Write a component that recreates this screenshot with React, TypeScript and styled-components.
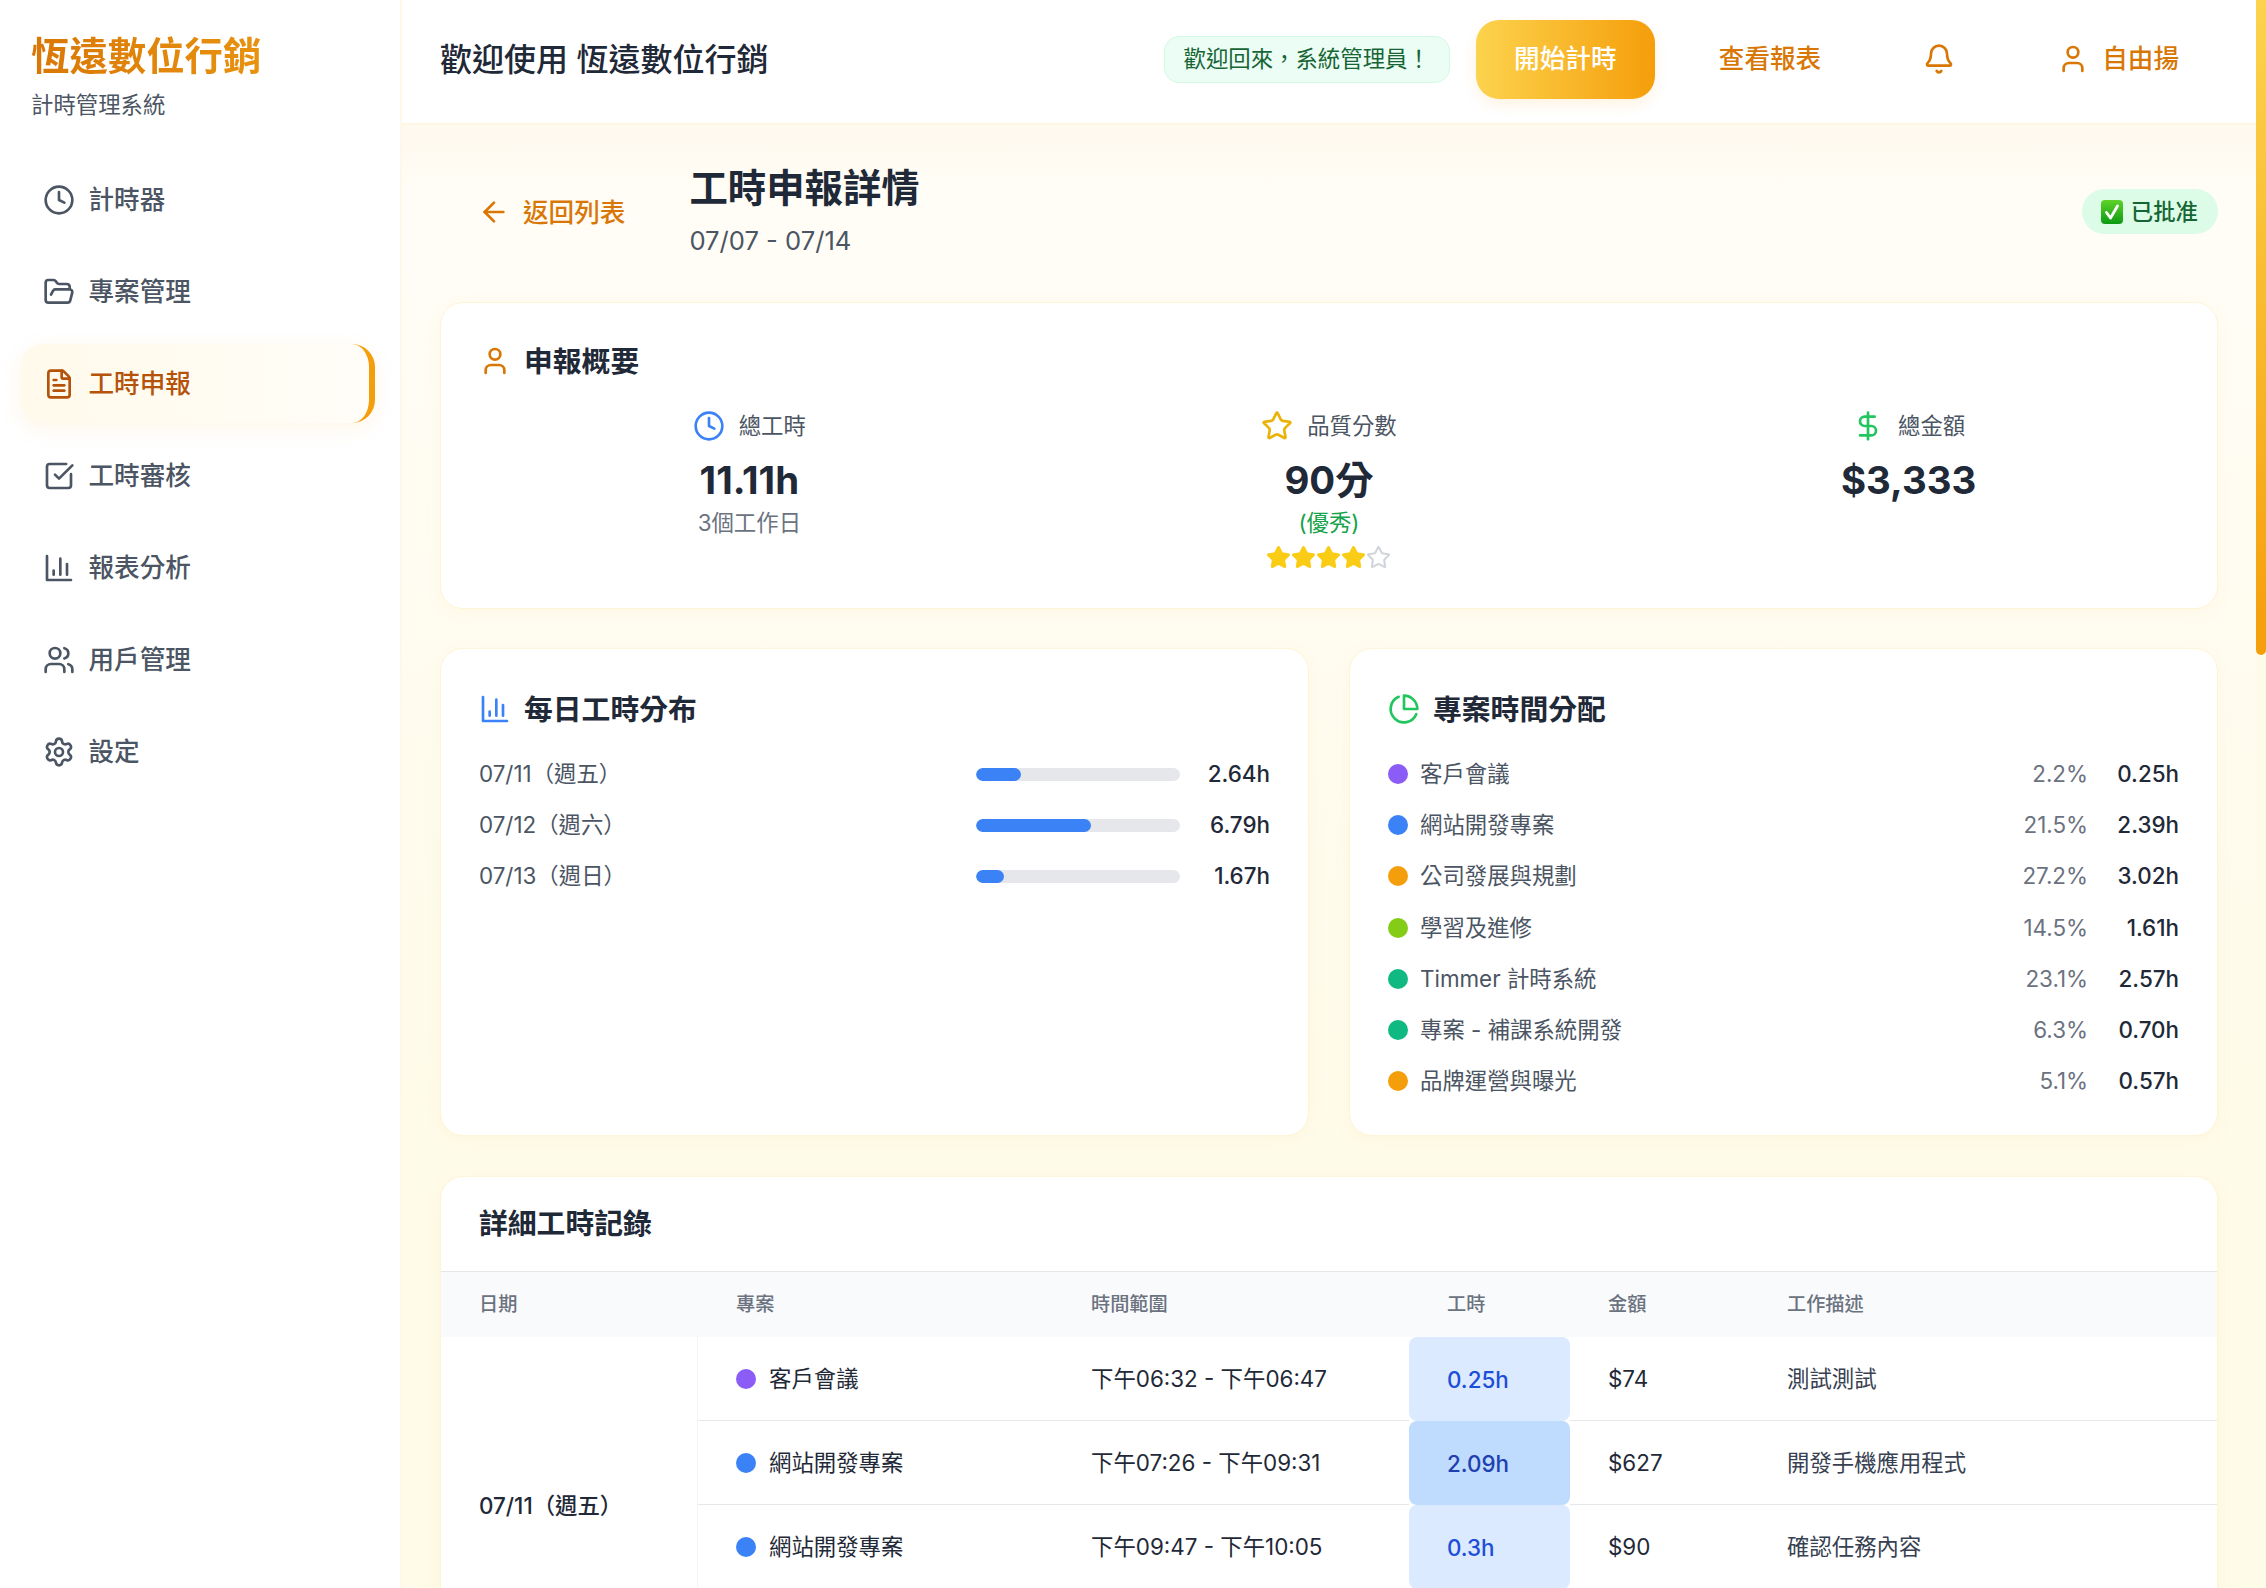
import React from "react";
import styled, { createGlobalStyle } from "styled-components";
import { ArrowLeft, Bell, Clock, DollarSign, FileText, FolderOpen, Settings, SquareCheckBig, Star, User, Users } from "lucide-react";

const FONT = `Inter, "Noto Sans CJK TC", "Noto Sans", sans-serif`;

const Global = createGlobalStyle`
  html, body { margin: 0; padding: 0; height: 100%; overflow: hidden; }
  body { font-family: ${FONT}; color: #1f2937; background: #fffdf4; }
  * { box-sizing: border-box; }
`;

const Shell = styled.div`
  display: flex;
  width: 2266px;
  height: 1588px;
  overflow: hidden;
  position: relative;
  background: #fefbe8;
`;

/* Noto CJK sits a little lower on the Inter baseline than the reference face does. */
const Lift = styled.span<{ $by: number }>`
  display: block;
  margin-bottom: ${(p) => p.$by * 2}px;
`;

const Sidebar = styled.aside`
  flex: 0 0 402px;
  background: #ffffff;
  border-right: 2px solid #fdf8ea;
  padding: 31px 25px 0 20px;
`;
const Logo = styled.div`
  margin-left: 11px;
  font-size: 38.4px;
  line-height: 50px;
  font-weight: 700;
  width: max-content;
  background: linear-gradient(90deg, #d97706, #e8920f);
  -webkit-background-clip: text;
  background-clip: text;
  color: transparent;
`;
const LogoSub = styled.div`
  margin: 9px 0 0 11px;
  font-size: 22.4px;
  line-height: 30px;
  color: #4b5563;
`;
const Nav = styled.nav`
  margin-top: 40px;
  display: flex;
  flex-direction: column;
  gap: 13px;
`;
const NavItem = styled.a<{ $active?: boolean }>`
  height: 79px;
  display: flex;
  align-items: center;
  gap: 13.5px;
  padding-left: 23px;
  border-radius: 23px;
  font-size: 25.6px;
  font-weight: 500;
  color: ${(p) => (p.$active ? "#b45309" : "#4b5563")};
  background: ${(p) => (p.$active ? "linear-gradient(90deg, #fffaeb, #fffdf7)" : "transparent")};
  border-right: ${(p) => (p.$active ? "6px solid #f59e0b" : "0")};
  box-shadow: ${(p) => (p.$active ? "0 6px 22px rgba(245, 158, 11, 0.09)" : "none")};
`;

const Main = styled.div`
  flex: 1;
  min-width: 0;
  margin-right: 10px;
  display: flex;
  flex-direction: column;
`;
const Header = styled.header`
  flex: 0 0 125px;
  display: flex;
  align-items: center;
  justify-content: space-between;
  padding: 0 39px 5px 38px;
  background: #ffffff;
  border-bottom: 2px solid #fdf6e3;
`;
const HeaderTitle = styled.h1`
  margin: 0;
  font-size: 32px;
  font-weight: 500;
  color: #1f2937;
`;
const HeaderActions = styled.div`
  display: flex;
  align-items: center;
  gap: 26px;
`;
const WelcomePill = styled.div`
  height: 47px;
  display: flex;
  align-items: center;
  padding: 0 19px;
  font-size: 22.4px;
  color: #166534;
  background: #ecfdf5;
  border: 1.5px solid #d1fae5;
  border-radius: 15px;
`;
const StartButton = styled.button`
  height: 79px;
  width: 179px;
  padding: 0;
  display: flex;
  align-items: center;
  justify-content: center;
  border: 0;
  border-radius: 23px;
  font: 500 25.6px ${FONT};
  color: #ffffff;
  background: linear-gradient(90deg, #fcd34d, #f59e0b);
  box-shadow: 0 6px 14px rgba(245, 158, 11, 0.12);
`;
const GhostButton = styled.button`
  height: 79px;
  padding: 0 38px;
  display: flex;
  align-items: center;
  gap: 13px;
  border: 0;
  background: transparent;
  font: 500 25.6px ${FONT};
  color: #d97706;
`;

const Page = styled.main`
  flex: 1;
  min-height: 0;
  overflow: hidden;
  padding: 38px 38px 0;
  background: linear-gradient(180deg, #fff9ee 0, #fffdf6 70px, #fffcf0 500px, #fefbe8 1100px);
`;
const PageHead = styled.div`
  display: flex;
  align-items: center;
  justify-content: space-between;
  margin-bottom: 42px;
`;
const PageHeadLeft = styled.div`
  display: flex;
  align-items: center;
  gap: 26px;
`;
const BackLink = styled.a`
  display: flex;
  align-items: center;
  gap: 13px;
  padding: 0 38px;
  font-size: 25.6px;
  font-weight: 500;
  color: #d97706;
`;
const PageTitle = styled.h2`
  margin: 0;
  font-size: 38.4px;
  line-height: 50px;
  font-weight: 700;
  color: #1f2937;
`;
const PageDate = styled.div`
  margin-top: 9px;
  font-size: 25.6px;
  line-height: 38px;
  color: #4b5563;
`;
const StatusBadge = styled.div`
  display: flex;
  align-items: center;
  gap: 8px;
  height: 45px;
  padding: 0 20px 0 19px;
  border-radius: 23px;
  background: #dcfce7;
  color: #166534;
  font-size: 22.4px;
  font-weight: 500;
`;

const Card = styled.section`
  background: #ffffff;
  border: 1.5px solid #fef5d6;
  border-radius: 23px;
  box-shadow: 0 4px 18px rgba(245, 158, 11, 0.05);
`;
const PadCard = styled(Card)`
  padding: 37px 38px 38px;
`;
const CardHeading = styled.h3<{ $offset?: number }>`
  margin: ${(p) => p.$offset ?? 0}px 0 0;
  display: flex;
  align-items: center;
  gap: 13px;
  height: 42px;
  font-size: 28.8px;
  font-weight: 600;
  color: #1f2937;
`;
const StatGrid = styled.div`
  margin-top: 29px;
  display: grid;
  grid-template-columns: repeat(3, 1fr);
  gap: 39px;
`;
const Stat = styled.div`
  display: flex;
  flex-direction: column;
  align-items: center;
`;
const StatLabel = styled.div`
  display: flex;
  align-items: center;
  gap: 14px;
  height: 32px;
  margin-top: -1px;
  margin-bottom: 1px;
  font-size: 22.4px;
  color: #4b5563;
`;
const StatValue = styled.div`
  margin-top: 14px;
  font-size: 38.4px;
  line-height: 46px;
  font-weight: 700;
  color: #1f2937;
`;
const StatSub = styled.div<{ $good?: boolean }>`
  margin-top: 5px;
  font-size: 22.4px;
  line-height: 30px;
  color: ${(p) => (p.$good ? "#16a34a" : "#6b7280")};
`;
const Rating = styled.div`
  margin-top: 6px;
  display: flex;
  height: 26px;
  align-items: center;
`;

const TwoCols = styled.div`
  margin-top: 39px;
  display: grid;
  grid-template-columns: 1fr 1fr;
  gap: 40px;
  height: 488px;
`;
const RowList = styled.div`
  margin-top: 28px;
  display: flex;
  flex-direction: column;
  gap: 19.2px;
`;
const DataRow = styled.div`
  display: flex;
  align-items: center;
  height: 32px;
  font-size: 22.4px;
`;
const DayLabel = styled.div`
  flex: 1;
  padding-bottom: 4px;
  color: #4b5563;
`;
const BarTrack = styled.div`
  flex: 0 0 204px;
  height: 13px;
  border-radius: 7px;
  overflow: hidden;
  background: #e5e7eb;
`;
const BarFill = styled.div`
  height: 100%;
  border-radius: 7px;
  background: #3b82f6;
`;
const Hours = styled.div`
  flex: 0 0 90px;
  padding-bottom: 1px;
  text-align: right;
  font-weight: 500;
  color: #1f2937;
`;
const Dot = styled.span<{ $color: string }>`
  flex: 0 0 20px;
  width: 20px;
  height: 20px;
  border-radius: 50%;
  background: ${(p) => p.$color};
`;
const ProjectName = styled.div`
  flex: 1;
  margin-left: 12px;
  padding-bottom: 4px;
  color: #4b5563;
`;
const Percent = styled.div`
  padding-bottom: 1px;
  color: #6b7280;
`;
const ProjectHours = styled.div`
  flex: 0 0 91px;
  padding-bottom: 1px;
  text-align: right;
  font-weight: 500;
  color: #1f2937;
`;

const TableCard = styled(Card)`
  margin-top: 40px;
  overflow: hidden;
`;
const TableTitle = styled.h3`
  margin: 0;
  padding: 0 38px 5px;
  height: 95px;
  display: flex;
  align-items: center;
  font-size: 28.8px;
  font-weight: 600;
  color: #1f2937;
  border-bottom: 1.5px solid #e5e7eb;
`;
const Table = styled.table`
  width: 100%;
  table-layout: fixed;
  border-collapse: separate;
  border-spacing: 0;
`;
const HeadCell = styled.th`
  height: 65px;
  padding: 0 38px 3px;
  text-align: left;
  font-size: 19.2px;
  font-weight: 500;
  color: #6b7280;
  background: #f9fafb;
`;
const Cell = styled.td`
  height: 84px;
  padding: 0 38px;
  font-size: 22.4px;
  color: #1f2937;
  border-bottom: 1.5px solid #e5e7eb;
`;
const DateCell = styled.td`
  padding: 0 0 3px 38px;
  font-size: 22.4px;
  font-weight: 500;
  color: #1f2937;
  border-right: 1.5px solid #f3f4f6;
`;
const DescCell = styled(Cell)`
  color: #374151;
`;
const HoursCell = styled.td<{ $strong?: boolean }>`
  height: 84px;
  padding: 0 38px;
  font-size: 22.4px;
  font-weight: 500;
  border-radius: 8px;
  color: ${(p) => (p.$strong ? "#1e40af" : "#1d4ed8")};
  background: ${(p) => (p.$strong ? "#bfdbfe" : "#dbeafe")};
`;
const ProjectCell = styled.div`
  display: flex;
  align-items: center;
  gap: 13px;
`;

const ScrollThumb = styled.div`
  position: absolute;
  top: 0;
  right: 0;
  width: 10px;
  height: 655px;
  border-radius: 0 0 5px 5px;
  background: linear-gradient(180deg, #fcd34d, #f59e0b);
`;

const ChartIcon = ({ color }: { color: string }) => (
  <svg width="32" height="32" viewBox="0 0 24 24" fill="none" stroke={color} strokeWidth="2" strokeLinecap="round" strokeLinejoin="round">
    <path d="M3 3v18h18" />
    <path d="M18 17V9" />
    <path d="M13 17V5" />
    <path d="M8 17v-3" />
  </svg>
);
const PieIcon = ({ color }: { color: string }) => (
  <svg width="32" height="32" viewBox="0 0 24 24" fill="none" stroke={color} strokeWidth="2" strokeLinecap="round" strokeLinejoin="round">
    <path d="M21.21 15.89A10 10 0 1 1 8 2.83" />
    <path d="M22 12A10 10 0 0 0 12 2v10z" />
  </svg>
);
const CheckEmoji = () => (
  <svg width="22" height="24" viewBox="0 0 22 24">
    <defs>
      <linearGradient id="chk" x1="0" y1="0" x2="0" y2="1">
        <stop offset="0" stopColor="#5fd32a" />
        <stop offset="1" stopColor="#0b9a12" />
      </linearGradient>
    </defs>
    <rect x="0" y="0" width="22" height="24" rx="4" fill="url(#chk)" />
    <path d="M5.5 12.5l4 5.5 7-12" fill="none" stroke="#fff" strokeWidth="2.8" strokeLinecap="round" strokeLinejoin="round" />
  </svg>
);

const NAV_ICON = { size: 32, strokeWidth: 2 };
const navItems = [
  { label: "計時器", icon: <Clock {...NAV_ICON} /> },
  { label: "專案管理", icon: <FolderOpen {...NAV_ICON} /> },
  { label: "工時申報", icon: <FileText {...NAV_ICON} />, active: true },
  { label: "工時審核", icon: <SquareCheckBig {...NAV_ICON} /> },
  { label: "報表分析", icon: <ChartIcon color="currentColor" /> },
  { label: "用戶管理", icon: <Users {...NAV_ICON} /> },
  { label: "設定", icon: <Settings {...NAV_ICON} /> },
];

const days = [
  { label: "07/11（週五）", hours: 2.64 },
  { label: "07/12（週六）", hours: 6.79 },
  { label: "07/13（週日）", hours: 1.67 },
];

const projects = [
  { name: "客戶會議", color: "#8b5cf6", pct: "2.2%", hrs: "0.25h" },
  { name: "網站開發專案", color: "#3b82f6", pct: "21.5%", hrs: "2.39h" },
  { name: "公司發展與規劃", color: "#f59e0b", pct: "27.2%", hrs: "3.02h" },
  { name: "學習及進修", color: "#84cc16", pct: "14.5%", hrs: "1.61h" },
  { name: "Timmer 計時系統", color: "#10b981", pct: "23.1%", hrs: "2.57h" },
  { name: "專案 - 補課系統開發", color: "#10b981", pct: "6.3%", hrs: "0.70h" },
  { name: "品牌運營與曝光", color: "#f59e0b", pct: "5.1%", hrs: "0.57h" },
];

const records = [
  { project: "客戶會議", color: "#8b5cf6", time: "下午06:32 - 下午06:47", hours: "0.25h", amount: "$74", desc: "測試測試" },
  { project: "網站開發專案", color: "#3b82f6", time: "下午07:26 - 下午09:31", hours: "2.09h", amount: "$627", desc: "開發手機應用程式", strong: true },
  { project: "網站開發專案", color: "#3b82f6", time: "下午09:47 - 下午10:05", hours: "0.3h", amount: "$90", desc: "確認任務內容" },
];

const COLS = [257, 355, 356, 161, 179, 468];

export default function App() {
  return (
    <Shell>
      <Global />
      <Sidebar>
        <Logo>恆遠數位行銷</Logo>
        <LogoSub>計時管理系統</LogoSub>
        <Nav>
          {navItems.map((n) => (
            <NavItem key={n.label} $active={n.active}>
              {n.icon}
              <Lift $by={2.5}>{n.label}</Lift>
            </NavItem>
          ))}
        </Nav>
      </Sidebar>
      <Main>
        <Header>
          <HeaderTitle>
            <Lift $by={2.5}>歡迎使用 恆遠數位行銷</Lift>
          </HeaderTitle>
          <HeaderActions>
            <WelcomePill>
              <Lift $by={2.5}>歡迎回來，系統管理員！</Lift>
            </WelcomePill>
            <StartButton>
              <Lift $by={2.5}>開始計時</Lift>
            </StartButton>
            <GhostButton>
              <Lift $by={2.5}>查看報表</Lift>
            </GhostButton>
            <GhostButton>
              <Bell size={32} />
            </GhostButton>
            <GhostButton>
              <User size={32} />
              <Lift $by={2.5}>自由揚</Lift>
            </GhostButton>
          </HeaderActions>
        </Header>
        <Page>
          <PageHead>
            <PageHeadLeft>
              <BackLink>
                <ArrowLeft size={32} />
                <Lift $by={1.5}>返回列表</Lift>
              </BackLink>
              <div>
                <PageTitle>工時申報詳情</PageTitle>
                <PageDate>07/07 - 07/14</PageDate>
              </div>
            </PageHeadLeft>
            <StatusBadge>
              <CheckEmoji />
              <Lift $by={1.5}>已批准</Lift>
            </StatusBadge>
          </PageHead>

          <PadCard>
            <CardHeading>
              <User size={32} color="#d97706" />
              <Lift $by={1.5}>申報概要</Lift>
            </CardHeading>
            <StatGrid>
              <Stat>
                <StatLabel>
                  <Clock size={32} color="#3b82f6" />
                  <Lift $by={2}>總工時</Lift>
                </StatLabel>
                <StatValue>11.11h</StatValue>
                <StatSub>3個工作日</StatSub>
              </Stat>
              <Stat>
                <StatLabel>
                  <Star size={32} color="#eab308" />
                  <Lift $by={2}>品質分數</Lift>
                </StatLabel>
                <StatValue>90分</StatValue>
                <StatSub $good>(優秀)</StatSub>
                <Rating>
                  {[0, 1, 2, 3].map((i) => (
                    <Star key={i} size={25} color="#facc15" fill="#facc15" />
                  ))}
                  <Star size={25} color="#d1d5db" />
                </Rating>
              </Stat>
              <Stat>
                <StatLabel>
                  <DollarSign size={32} color="#22c55e" />
                  <Lift $by={2}>總金額</Lift>
                </StatLabel>
                <StatValue>$3,333</StatValue>
              </Stat>
            </StatGrid>
          </PadCard>

          <TwoCols>
            <PadCard>
              <CardHeading $offset={2}>
                <ChartIcon color="#3b82f6" />
                <Lift $by={1.5}>每日工時分布</Lift>
              </CardHeading>
              <RowList>
                {days.map((d) => (
                  <DataRow key={d.label}>
                    <DayLabel>{d.label}</DayLabel>
                    <BarTrack>
                      <BarFill style={{ width: `${(d.hours / 12) * 100}%` }} />
                    </BarTrack>
                    <Hours>{d.hours.toFixed(2)}h</Hours>
                  </DataRow>
                ))}
              </RowList>
            </PadCard>
            <PadCard>
              <CardHeading $offset={2}>
                <PieIcon color="#22c55e" />
                <Lift $by={1.5}>專案時間分配</Lift>
              </CardHeading>
              <RowList>
                {projects.map((p) => (
                  <DataRow key={p.name}>
                    <Dot $color={p.color} />
                    <ProjectName>{p.name}</ProjectName>
                    <Percent>{p.pct}</Percent>
                    <ProjectHours>{p.hrs}</ProjectHours>
                  </DataRow>
                ))}
              </RowList>
            </PadCard>
          </TwoCols>

          <TableCard>
            <TableTitle>詳細工時記錄</TableTitle>
            <Table>
              <colgroup>
                {COLS.map((w, i) => (
                  <col key={i} width={w} />
                ))}
              </colgroup>
              <thead>
                <tr>
                  {["日期", "專案", "時間範圍", "工時", "金額", "工作描述"].map((h) => (
                    <HeadCell key={h}>{h}</HeadCell>
                  ))}
                </tr>
              </thead>
              <tbody>
                {records.map((r, i) => (
                  <tr key={i}>
                    {i === 0 && <DateCell rowSpan={4}>07/11（週五）</DateCell>}
                    <Cell>
                      <ProjectCell>
                        <Dot $color={r.color} />
                        <Lift $by={1.5}>{r.project}</Lift>
                      </ProjectCell>
                    </Cell>
                    <Cell>
                      <Lift $by={1.5}>{r.time}</Lift>
                    </Cell>
                    <HoursCell $strong={r.strong}>{r.hours}</HoursCell>
                    <Cell>{r.amount}</Cell>
                    <DescCell>
                      <Lift $by={1.5}>{r.desc}</Lift>
                    </DescCell>
                  </tr>
                ))}
                <tr>
                  <Cell colSpan={5} />
                </tr>
              </tbody>
            </Table>
          </TableCard>
        </Page>
      </Main>
      <ScrollThumb />
    </Shell>
  );
}
